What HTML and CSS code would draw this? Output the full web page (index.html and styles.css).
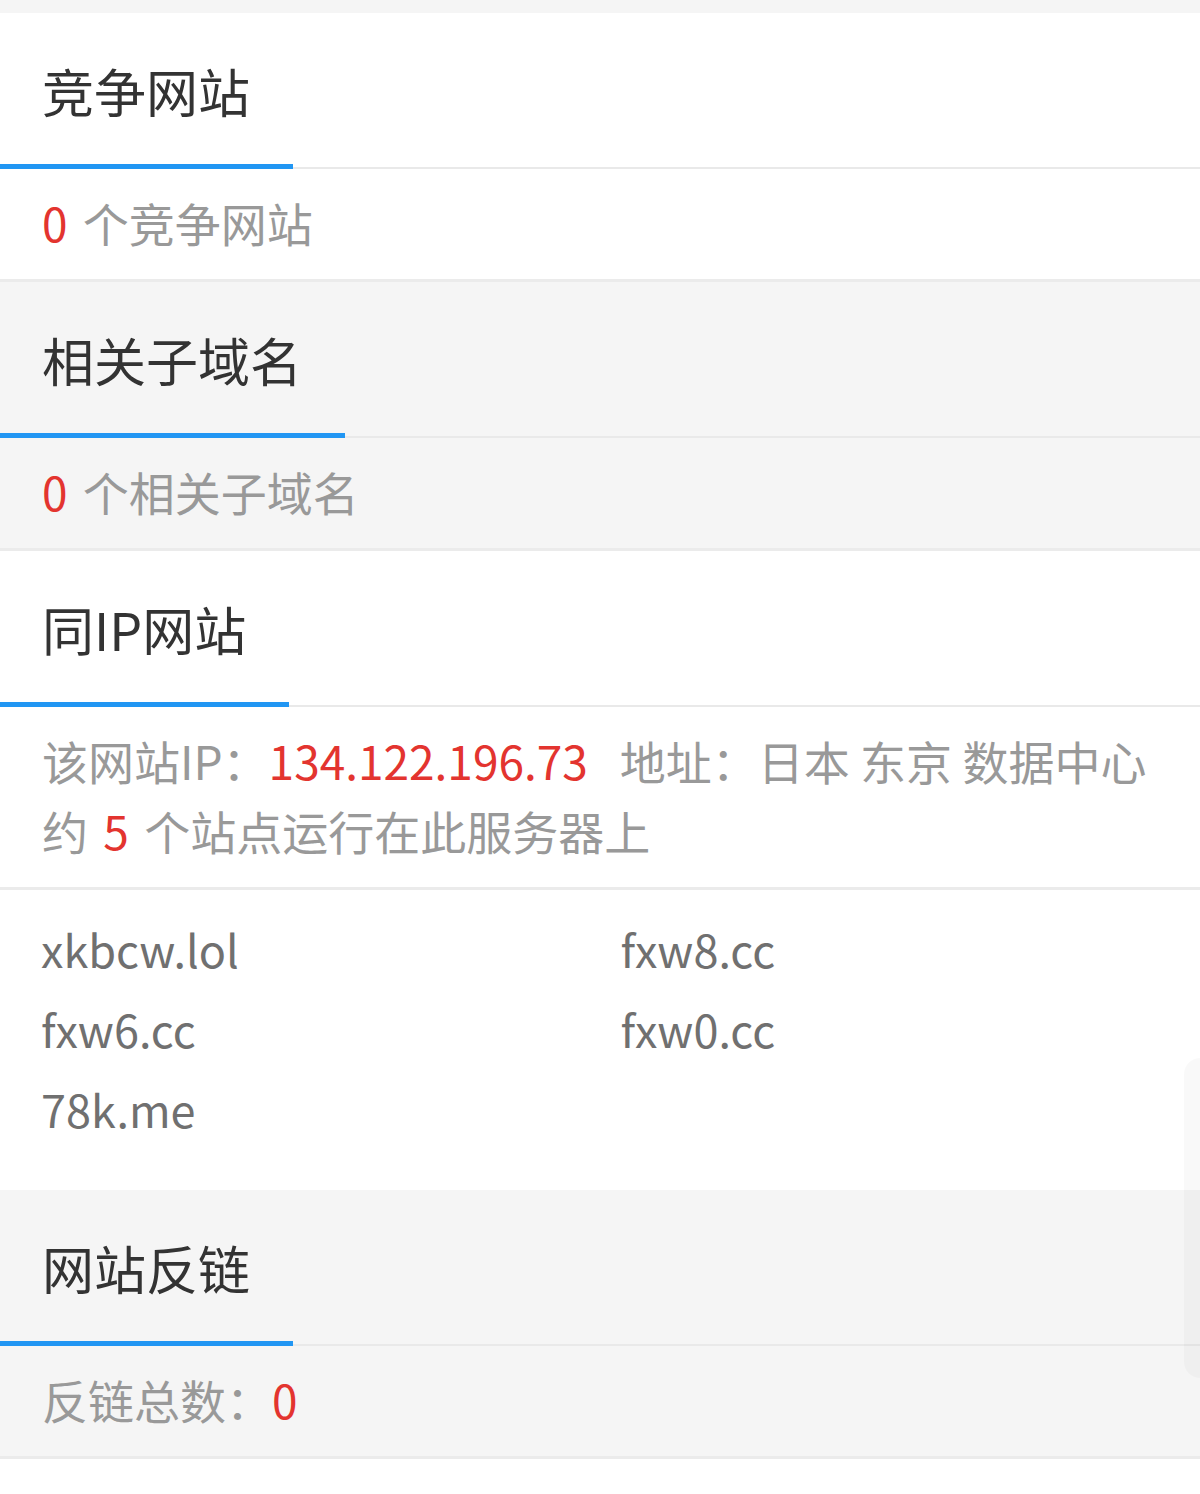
FILE: index.html
```html
<!DOCTYPE html>
<html lang="zh-CN">
<head>
<meta charset="utf-8">
<title>网站信息</title>
<link rel="stylesheet" href="styles.css">
</head>
<body>
<div class="page">
  <div class="top-strip"></div>

  <section class="block white">
    <div class="block-head"><h2 class="tab">竞争网站</h2></div>
    <div class="block-body"><span class="num">0</span> 个竞争网站</div>
  </section>

  <section class="block gray">
    <div class="block-head"><h2 class="tab">相关子域名</h2></div>
    <div class="block-body"><span class="num">0</span> 个相关子域名</div>
  </section>

  <section class="block white noborder">
    <div class="block-head"><h2 class="tab">同IP网站</h2></div>
    <div class="block-body ipinfo">
      <div class="ipline">该网站IP：<span class="num">134.122.196.73</span><span class="addr">地址：日本 东京 数据中心</span></div>
      <div>约 <span class="num">5</span> 个站点运行在此服务器上</div>
    </div>
    <ul class="domains">
      <li>xkbcw.lol</li>
      <li>fxw8.cc</li>
      <li>fxw6.cc</li>
      <li>fxw0.cc</li>
      <li>78k.me</li>
    </ul>
  </section>

  <section class="block gray">
    <div class="block-head"><h2 class="tab">网站反链</h2></div>
    <div class="block-body">反链总数：<span class="num">0</span></div>
  </section>
</div>
<div class="scroll-thumb"></div>
</body>
</html>
```
FILE: styles.css
```css
html, body {
  margin: 0;
  padding: 0;
  background: #ffffff;
}
body {
  font-family: "Noto Sans CJK SC", "Noto Sans", sans-serif;
  color: #999999;
}
.page {
  width: 1200px;
}
.top-strip {
  height: 13px;
  background: #f5f5f5;
}
.block.white { background: #ffffff; }
.block.gray { background: #f5f5f5; }

.block-head {
  display: flex;
  align-items: flex-end;
  border-bottom: 2px solid #e9e9e9;
  height: 154px;
}
.tab {
  margin: 0 0 -2px 0;
  padding: 0 43px 43px 42px;
  font-size: 52px;
  font-weight: 400;
  line-height: 60px;
  color: #333333;
  border-bottom: 5px solid #2196f3;
}
.block-body {
  padding: 18px 42px 22px;
  font-size: 46px;
  line-height: 70px;
  word-spacing: 5px;
  color: #999999;
  border-bottom: 3px solid #ebebeb;
}
.ipinfo {
  padding-right: 0;
}
.ipline {
  white-space: nowrap;
  word-spacing: 0;
}
.num {
  color: #e3342f;
}
.addr {
  margin-left: 32px;
}
.domains {
  list-style: none;
  margin: 0;
  padding: 19px 0 41px 41px;
  display: grid;
  grid-template-columns: 1fr 1fr;
}
.domains li {
  font-size: 45px;
  line-height: 80px;
  color: #707070;
}
.scroll-thumb {
  position: fixed;
  right: 0;
  top: 1058px;
  width: 16px;
  height: 320px;
  border-radius: 16px 0 0 16px;
  background: rgba(0, 0, 0, 0.025);
}
```
